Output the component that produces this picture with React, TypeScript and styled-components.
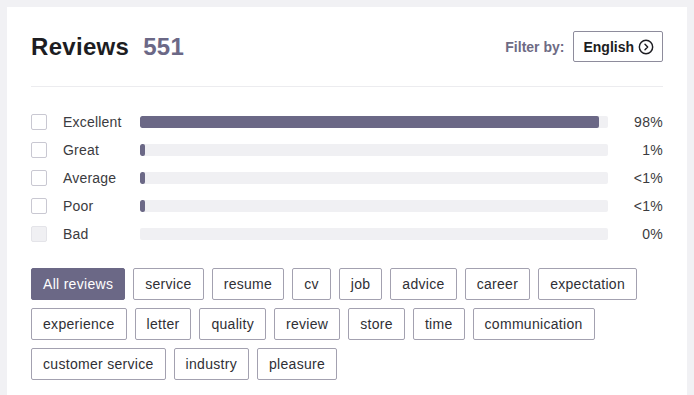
import styled, { createGlobalStyle } from 'styled-components'

const GlobalStyle = createGlobalStyle`
  body {
    margin: 0;
    background: #f1f1f4;
    font-family: "Liberation Sans", Arial, sans-serif;
  }
`

interface RatingI {
  label: string
  value: number
  text: string
  disabled?: boolean
}

const ratings: RatingI[] = [
  { label: 'Excellent', value: 98, text: '98%' },
  { label: 'Great', value: 1, text: '1%' },
  { label: 'Average', value: 1, text: '<1%' },
  { label: 'Poor', value: 1, text: '<1%' },
  { label: 'Bad', value: 0, text: '0%', disabled: true },
]

const tags = [
  'service', 'resume', 'cv', 'job', 'advice', 'career', 'expectation',
  'experience', 'letter', 'quality', 'review', 'store', 'time', 'communication',
  'customer service', 'industry', 'pleasure',
]

const ChevronCircle = () => (
  <svg width="16" height="16" viewBox="0 0 24 24" fill="none" stroke="#1d1d22" strokeWidth="2.2" strokeLinecap="round" strokeLinejoin="round">
    <circle cx="12" cy="12" r="10" />
    <path d="m10.5 16 4-4-4-4" />
  </svg>
)

export default function App() {
  return (
    <>
      <GlobalStyle />
      <Page$>
        <Card$>
          <Header$>
            <Title$>
              Reviews <Count$>551</Count$>
            </Title$>
            <Filter$>
              <FilterLabel$>Filter by:</FilterLabel$>
              <LangButton$>
                English <ChevronCircle />
              </LangButton$>
            </Filter$>
          </Header$>
          <Rows$>
            {ratings.map((r) => (
              <Row$ key={r.label}>
                <Check$ $disabled={r.disabled} />
                <Label$>{r.label}</Label$>
                <Track$>
                  {r.value > 0 && <Fill$ style={{ width: `max(${r.value}%, 5px)` }} />}
                </Track$>
                <Percent$>{r.text}</Percent$>
              </Row$>
            ))}
          </Rows$>
          <Tags$>
            <Tag$ $active>All reviews</Tag$>
            {tags.map((t) => (
              <Tag$ key={t}>{t}</Tag$>
            ))}
          </Tags$>
        </Card$>
      </Page$>
    </>
  )
}

const Page$ = styled.div`
  padding: 7px 7px 0 7px;
`

const Card$ = styled.div`
  background: #fff;
  padding: 24px 24px 40px 24px;
  min-height: 400px;
  box-sizing: border-box;
`

const Header$ = styled.div`
  display: flex;
  justify-content: space-between;
  align-items: center;
  padding-bottom: 24px;
  border-bottom: 1px solid #ececef;
`

const Title$ = styled.h2`
  margin: 0;
  font-size: 24px;
  font-weight: 700;
  letter-spacing: 0.3px;
  color: #1d1d22;
  display: flex;
  gap: 14px;
  align-items: baseline;
`

const Count$ = styled.span`
  color: #6b6886;
  font-weight: 700;
`

const Filter$ = styled.div`
  display: flex;
  align-items: center;
  gap: 9px;
`

const FilterLabel$ = styled.span`
  font-size: 14px;
  font-weight: 700;
  color: #6e6b84;
`

const LangButton$ = styled.button`
  display: flex;
  align-items: center;
  gap: 4px;
  height: 31px;
  padding: 0 8px 0 9px;
  border: 1px solid #8e8c9c;
  border-radius: 2px;
  background: #fff;
  font-family: inherit;
  font-size: 14px;
  font-weight: 700;
  color: #1d1d22;
`

const Rows$ = styled.div`
  margin-top: 21px;
  display: flex;
  flex-direction: column;
`

const Row$ = styled.div`
  display: flex;
  align-items: center;
  height: 28px;
`

const Check$ = styled.span<{ $disabled?: boolean }>`
  width: 14px;
  height: 14px;
  border: 1px solid ${(p) => (p.$disabled ? '#e4e4e9' : '#c9c8d2')};
  background: ${(p) => (p.$disabled ? '#f0f0f3' : '#fff')};
  border-radius: 2px;
  flex-shrink: 0;
`

const Label$ = styled.span`
  width: 77px;
  margin-left: 16px;
  font-size: 14px;
  letter-spacing: 0.2px;
  color: #3b3b40;
`

const Track$ = styled.div`
  flex: 1;
  height: 12px;
  background: #f0f0f3;
  border-radius: 2px;
  overflow: hidden;
`

const Fill$ = styled.div`
  height: 100%;
  background: #6b6886;
  border-radius: 2px;
`

const Percent$ = styled.span`
  width: 55px;
  text-align: right;
  font-size: 14px;
  color: #3b3b40;
  letter-spacing: 0.3px;
`

const Tags$ = styled.div`
  margin-top: 20px;
  display: flex;
  flex-wrap: wrap;
  gap: 8px;
`

const Tag$ = styled.button<{ $active?: boolean }>`
  height: 32px;
  padding: 0 11px;
  border: 1px solid ${(p) => (p.$active ? '#6b6886' : '#a3a1b0')};
  border-radius: 2px;
  background: ${(p) => (p.$active ? '#6b6886' : '#fff')};
  color: ${(p) => (p.$active ? '#fff' : '#2f2f35')};
  font-family: inherit;
  font-size: 14px;
  letter-spacing: 0.3px;
`
